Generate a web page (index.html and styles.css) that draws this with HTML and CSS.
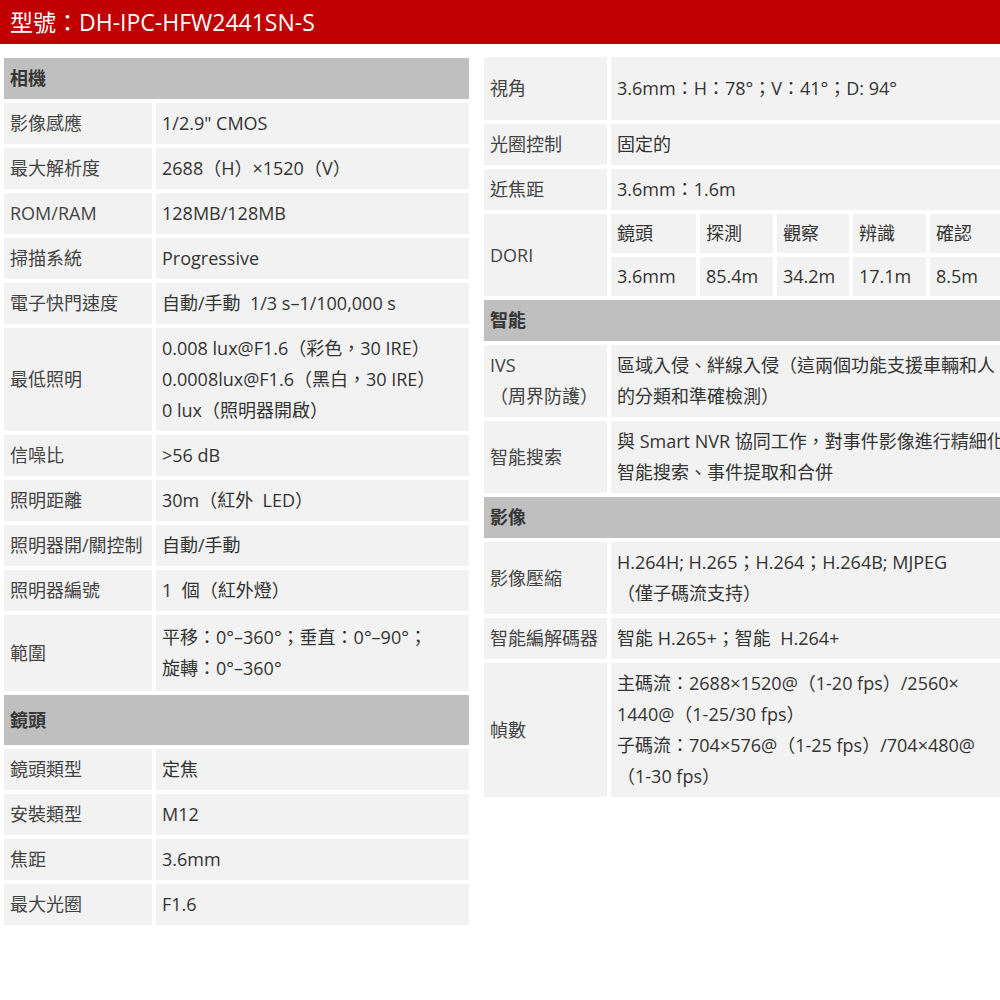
FILE: index.html
```html
<!DOCTYPE html>
<html lang="zh-Hant">
<head>
<meta charset="utf-8">
<title>DH-IPC-HFW2441SN-S</title>
<link rel="stylesheet" href="styles.css">
</head>
<body>
<header class="titlebar">型號：DH-IPC-HFW2441SN-S</header>
<main class="sheet">
  <table class="spec spec-left">
    <colgroup><col class="c-label-l"><col class="c-value-l"></colgroup>
    <tr><th class="sec" colspan="2">相機</th></tr>
    <tr><td class="lbl">影像感應</td><td class="val">1/2.9" CMOS</td></tr>
    <tr><td class="lbl">最大解析度</td><td class="val">2688（H）×1520（V）</td></tr>
    <tr><td class="lbl">ROM/RAM</td><td class="val">128MB/128MB</td></tr>
    <tr><td class="lbl">掃描系統</td><td class="val">Progressive</td></tr>
    <tr><td class="lbl">電子快門速度</td><td class="val">自動/手動&nbsp; 1/3 s–1/100,000 s</td></tr>
    <tr><td class="lbl">最低照明</td><td class="val">0.008 lux@F1.6（彩色，30 IRE）<br>0.0008lux@F1.6（黑白，30 IRE）<br>0 lux（照明器開啟）</td></tr>
    <tr><td class="lbl">信噪比</td><td class="val">&gt;56 dB</td></tr>
    <tr><td class="lbl">照明距離</td><td class="val">30m（紅外&nbsp; LED）</td></tr>
    <tr><td class="lbl">照明器開/關控制</td><td class="val">自動/手動</td></tr>
    <tr><td class="lbl">照明器編號</td><td class="val">1&nbsp; 個（紅外燈）</td></tr>
    <tr class="row-range"><td class="lbl">範圍</td><td class="val">平移：0°–360°；垂直：0°–90°；<br>旋轉：0°–360°</td></tr>
    <tr><th class="sec sec-tall" colspan="2">鏡頭</th></tr>
    <tr><td class="lbl">鏡頭類型</td><td class="val">定焦</td></tr>
    <tr><td class="lbl">安裝類型</td><td class="val">M12</td></tr>
    <tr><td class="lbl">焦距</td><td class="val">3.6mm</td></tr>
    <tr><td class="lbl">最大光圈</td><td class="val">F1.6</td></tr>
  </table>

  <table class="spec spec-right">
    <colgroup>
      <col class="c-label-r"><col class="c-d1"><col class="c-d2"><col class="c-d3"><col class="c-d4"><col class="c-d5">
    </colgroup>
    <tr class="row-view"><td class="lbl">視角</td><td class="val" colspan="5">3.6mm：H：78°；V：41°；D: 94°</td></tr>
    <tr><td class="lbl">光圈控制</td><td class="val" colspan="5">固定的</td></tr>
    <tr><td class="lbl">近焦距</td><td class="val" colspan="5">3.6mm：1.6m</td></tr>
    <tr class="row-dori"><td class="lbl" rowspan="2">DORI</td><td class="val">鏡頭</td><td class="val">探測</td><td class="val">觀察</td><td class="val">辨識</td><td class="val">確認</td></tr>
    <tr class="row-dori"><td class="val">3.6mm</td><td class="val">85.4m</td><td class="val">34.2m</td><td class="val">17.1m</td><td class="val">8.5m</td></tr>
    <tr><th class="sec" colspan="6">智能</th></tr>
    <tr><td class="lbl">IVS<br>（周界防護）</td><td class="val" colspan="5">區域入侵、絆線入侵（這兩個功能支援車輛和人<br>的分類和準確檢測）</td></tr>
    <tr><td class="lbl">智能搜索</td><td class="val" colspan="5">與 Smart NVR 協同工作，對事件影像進行精細化<br>智能搜索、事件提取和合併</td></tr>
    <tr><th class="sec sec-short" colspan="6">影像</th></tr>
    <tr><td class="lbl">影像壓縮</td><td class="val" colspan="5">H.264H; H.265；H.264；H.264B; MJPEG<br>（僅子碼流支持）</td></tr>
    <tr><td class="lbl">智能編解碼器</td><td class="val" colspan="5">智能 H.265+；智能&nbsp; H.264+</td></tr>
    <tr><td class="lbl">幀數</td><td class="val" colspan="5">主碼流：2688×1520@（1-20 fps）/2560×<br>1440@（1-25/30 fps）<br>子碼流：704×576@（1-25 fps）/704×480@<br>（1-30 fps）</td></tr>
  </table>
</main>
</body>
</html>
```

FILE: styles.css
```css
* { box-sizing: border-box; }

html, body {
  margin: 0;
  padding: 0;
  overflow: hidden;
  background: #ffffff;
}

body {
  font-family: "Open Sans", "Noto Sans CJK TC", sans-serif;
  font-size: 18px;
  color: #3a3a3a;
}

.titlebar {
  height: 44px;
  background: #c00000;
  color: #ffffff;
  font-size: 23px;
  line-height: 44px;
  padding-left: 10px;
  white-space: nowrap;
}

.sheet {
  display: flex;
  align-items: flex-start;
  gap: 7px;
  margin-top: 10px;
}

.spec {
  flex-shrink: 0;
  border-collapse: separate;
  border-spacing: 4px;
  table-layout: fixed;
}

.spec-left { width: 473px; }
.spec-right { width: 532px; margin-top: -1px; }

.c-label-l { width: 148px; }
.c-value-l { width: 313px; }

.c-label-r { width: 123px; }
.c-d1 { width: 85px; }
.c-d2 { width: 73px; }
.c-d3 { width: 72px; }
.c-d4 { width: 73px; }
.c-d5 { width: 78px; }

.spec td,
.spec th {
  padding: 5px 4px 5px 6px;
  line-height: 31px;
  vertical-align: middle;
  text-align: left;
  white-space: nowrap;
  overflow: hidden;
}

.spec td {
  background: #f2f2f2;
}

.lbl { color: #434343; }
.val { color: #333333; }

.sec {
  background: #bfbfbf;
  color: #363636;
  font-weight: 700;
  padding-top: 6px;
  padding-bottom: 6px;
}

.sec-tall { height: 50px; }
.sec-short { height: 41px; padding-top: 5px; padding-bottom: 5px; }

.row-view td { height: 63px; }
.row-range td { height: 76px; }
.row-dori td { height: 39px; padding-top: 4px; padding-bottom: 4px; }
```
